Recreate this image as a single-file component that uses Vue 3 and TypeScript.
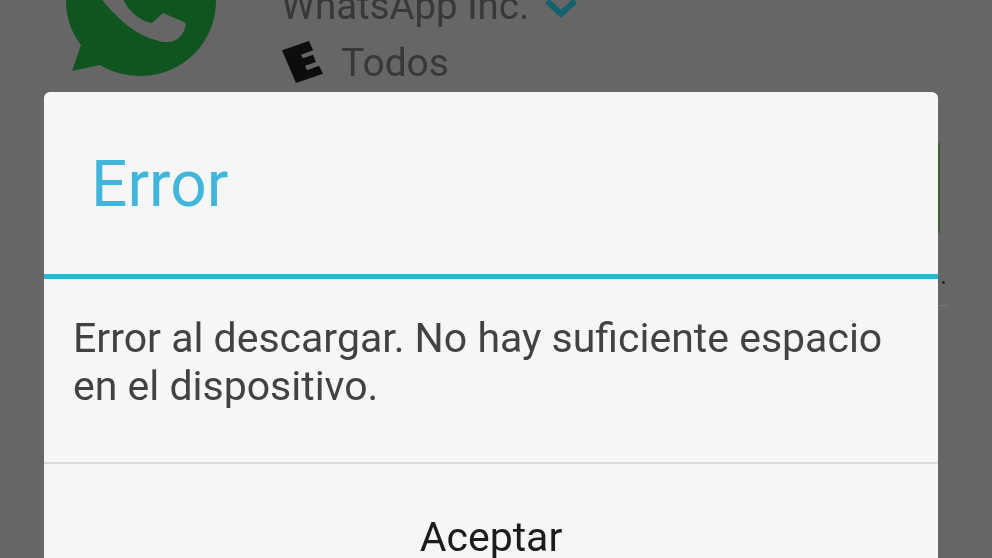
<script setup lang="ts">
const title = 'Error'
const message = 'Error al descargar. No hay suficiente espacio en el dispositivo.'
</script>

<template>
  <div class="screen">
    <header class="app-info">
      <svg class="logo" width="165" height="92" viewBox="60 0 165 92" aria-hidden="true">
        <path class="logo-green" d="M141 -74a75 75 0 0 1 0 150c-15 0-30-4-41-11l-28 6 9-26c-10-13-15-28-15-44a75 75 0 0 1 75-75z" />
        <path class="logo-phone" d="M100 -4h22c2 7 6 12 11 17 5 5 12 9 19 10l11-10 21 9c2 1 2 3 1 6-2 6-5 9-9 12-7 3-13 3-20 0-13-3-26-11-37-22-8-8-15-14-19-22z" />
      </svg>
      <div class="meta">
        <div class="publisher">
          <span>WhatsApp Inc.</span>
          <svg width="34" height="24" viewBox="0 0 34 24" aria-hidden="true">
            <path class="chevron" d="M3 5 17 18 31 5" />
          </svg>
        </div>
        <div class="rating">
          <svg width="44" height="42" viewBox="0 0 44 46" preserveAspectRatio="none" aria-hidden="true">
            <path class="esrb" d="M1 10 28 0 32 10 20 15 22 19 32 15 35 23 24 27 26 32 38 27 42 36 15 46z" />
          </svg>
          <span class="rating-label">Todos</span>
        </div>
      </div>
    </header>

    <section class="dialog">
      <h1 class="title">{{ title }}</h1>
      <p class="message">{{ message }}</p>
      <button class="action" type="button">Aceptar</button>
      <span class="sliver"></span>
      <span class="dot"></span>
      <span class="rule"></span>
    </section>
  </div>
</template>

<style scoped>
.screen {
  width: 992px;
  height: 558px;
  overflow: hidden;
  background: #666666;
  font-family: Roboto, "Liberation Sans", sans-serif;
  filter: blur(0.5px);
}
.app-info {
  height: 92px;
  display: flex;
  gap: 58px;
  padding-left: 60px;
  overflow: hidden;
}
.logo { flex: none; }
.logo-green { fill: #105420; }
.logo-phone { fill: #666666; }
.meta {
  margin-top: -18px;
  margin-left: -2px;
  color: #383838;
  font-size: 39px;
  line-height: 44px;
}
.publisher, .rating { display: flex; align-items: center; }
.publisher { gap: 15px; height: 48px; font-size: 38.4px; }
.publisher svg { margin-top: 4px; }
.rating { gap: 16px; height: 42px; margin-top: 11px; }
.rating-label { margin-top: 2px; }
.chevron { fill: none; stroke: #14636c; stroke-width: 6; }
.esrb { fill: #0d0d0d; }
.dialog {
  position: relative;
  margin: 0 54px 0 44px;
  height: 520px;
  background: #f6f6f6;
  border-radius: 6px 6px 0 0;
}
.title {
  margin: 0;
  height: 187px;
  box-sizing: border-box;
  padding: 57px 0 0 47px;
  border-bottom: 5px solid #35b0d5;
  color: #41b6da;
  font-size: 64px;
  font-weight: 400;
  line-height: 72px;
}
.message {
  margin: 0;
  height: 185px;
  box-sizing: border-box;
  padding: 35px 29px 0;
  border-bottom: 2px solid #dcdcdc;
  color: #424242;
  font-size: 41px;
  line-height: 48px;
}
.action {
  display: block;
  width: 100%;
  padding: 51px 0 0;
  border: 0;
  background: none;
  color: #1c1c1c;
  font: 400 41px/44px Roboto, "Liberation Sans", sans-serif;
  text-align: center;
}
.sliver {
  position: absolute;
  left: 100%;
  top: 51px;
  width: 2px;
  height: 90px;
  background: #3f5c38;
}
.dot {
  position: absolute;
  left: calc(100% + 4px);
  top: 189px;
  width: 3px;
  height: 3px;
  border-radius: 50%;
  background: #222222;
}
.rule {
  position: absolute;
  left: 100%;
  top: 213px;
  width: 10px;
  height: 1px;
  background: #777777;
}
</style>
